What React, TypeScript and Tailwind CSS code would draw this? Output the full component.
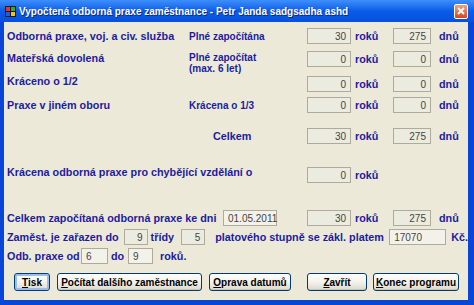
import React from 'react';

const lbl = 'text-[#1c1ca0] font-bold whitespace-nowrap';

const Box = ({ value, w, align = 'right', light = false }: { value: string; w: string; align?: 'left' | 'right'; light?: boolean }) => (
  <div
    className={`${w} h-[16px] shrink-0 border border-[#aeab9c] ${light ? 'bg-[#f3f2ea]' : 'bg-[#ecebdf]'} flex items-center px-[4px] text-[10px] font-normal text-[#444] ${
      align === 'right' ? 'justify-end' : 'justify-start'
    }`}
  >
    {value}
  </div>
);

// years + days pair used in the upper block
const YearsDays = ({ y, d }: { y: string; d: string }) => (
  <>
    <Box value={y} w="w-[44px]" />
    <span className={`${lbl} w-[42px] pl-[4px]`}>roků</span>
    <Box value={d} w="w-[38px]" />
    <span className={`${lbl} pl-[8px]`}>dnů</span>
  </>
);

const Btn = ({ children, w, focused = false }: { children: React.ReactNode; w: string; focused?: boolean }) => (
  <button
    className={`${w} h-[18px] shrink-0 rounded-[3px] border border-[#003c74] bg-gradient-to-b from-[#ffffff] via-[#f3f2ec] to-[#dcd9cc] text-[10px] font-bold text-black whitespace-nowrap flex items-center justify-center ${
      focused ? 'shadow-[inset_0_0_0_2px_#9cbcf0]' : 'shadow-[inset_0_-1px_0_#c9c5b5]'
    }`}
  >
    {children}
  </button>
);

export default function App() {
  return (
    <div
      className="w-[474px] h-[305px] flex flex-col bg-[#0846d8] overflow-hidden"
      style={{ fontFamily: '"Liberation Sans", Arial, sans-serif' }}
    >
      {/* Title bar */}
      <div className="h-[22px] shrink-0 flex items-center pl-[5px] pr-[6px] bg-gradient-to-b from-[#3d8ffc] via-[#0a5ce8] to-[#0650dc]">
        <svg width="11" height="11" viewBox="0 0 11 11" className="shrink-0">
          <rect x="0" y="0" width="11" height="11" fill="#1a1a1a" />
          <rect x="1" y="1" width="4" height="4" fill="#e23a2a" />
          <rect x="6" y="1" width="4" height="4" fill="#3aa63a" />
          <rect x="1" y="6" width="4" height="4" fill="#2a5ad8" />
          <rect x="6" y="6" width="4" height="4" fill="#f2c21a" />
        </svg>
        <span className="ml-[3px] text-white font-bold text-[10px] whitespace-nowrap [text-shadow:1px_1px_0_#0a2a8a]">
          Vypočtená odborná praxe zaměstnance - Petr Janda sadgsadha ashd
        </span>
        <div className="ml-auto w-[14px] h-[15px] rounded-[2px] border border-white bg-gradient-to-b from-[#f0a080] to-[#d6431c] flex items-center justify-center">
          <svg width="8" height="8" viewBox="0 0 8 8">
            <path d="M1 1 L7 7 M7 1 L1 7" stroke="white" strokeWidth="1.8" />
          </svg>
        </div>
      </div>

      {/* Body */}
      <div className="flex-1 ml-[4px] mr-[6px] mb-[5px] bg-[#ece9d8] pl-[3px] text-[10.8px] flex flex-col">
        <div className="mt-[6px] h-[16px] flex items-center">
          <span className={`${lbl} w-[182px]`}>Odborná praxe, voj. a civ. služba</span>
          <span className={`${lbl} w-[118px] text-[10px]`}>Plné započítána</span>
          <YearsDays y="30" d="275" />
        </div>
        <div className="mt-[7px] h-[16px] flex items-start">
          <span className={`${lbl} w-[182px] leading-[14px]`}>Mateřská dovolená</span>
          <span className={`${lbl} w-[118px] text-[10px] leading-[11px] pt-[1px]`}>
            Plné započítat
            <br />
            (max. 6 let)
          </span>
          <div className="flex items-center">
            <YearsDays y="0" d="0" />
          </div>
        </div>
        <div className="mt-[9px] h-[16px] flex items-center">
          <span className={`${lbl} w-[300px] -mt-[6px]`}>Kráceno o 1/2</span>
          <YearsDays y="0" d="0" />
        </div>
        <div className="mt-[5px] h-[16px] flex items-center">
          <span className={`${lbl} w-[182px]`}>Praxe v jiném oboru</span>
          <span className={`${lbl} w-[118px] text-[10px]`}>Krácena o 1/3</span>
          <YearsDays y="0" d="0" />
        </div>

        <div className="mt-[15px] h-[16px] flex items-center">
          <span className="w-[206px] shrink-0" />
          <span className={`${lbl} w-[94px]`}>Celkem</span>
          <YearsDays y="30" d="275" />
        </div>
        <div className="mt-[23px] h-[16px] flex items-center">
          <span className={`${lbl} w-[300px] -mt-[5px]`}>Krácena odborná praxe pro chybějící vzdělání o</span>
          <Box value="0" w="w-[44px]" />
          <span className={`${lbl} pl-[4px]`}>roků</span>
        </div>

        <div className="mt-[27px] h-[16px] flex items-center">
          <span className={`${lbl} w-[216px]`}>Celkem započítaná odborná praxe ke dni</span>
          <Box value="01.05.2011" w="w-[54px]" align="left" light />
          <span className="w-[30px] shrink-0" />
          <YearsDays y="30" d="275" />
        </div>
        <div className="mt-[3px] h-[16px] flex items-center">
          <span className={`${lbl} w-[118px]`}>Zaměst. je zařazen do</span>
          <Box value="9" w="w-[24px]" />
          <span className={`${lbl} w-[34px] pl-[3px]`}>třídy</span>
          <Box value="5" w="w-[24px]" />
          <span className={`${lbl} w-[186px] pl-[10px]`}>platového stupně se zákl. platem</span>
          <Box value="17070" w="w-[57px]" align="left" light />
          <span className={`${lbl} pl-[5px]`}>Kč.</span>
        </div>
        <div className="mt-[3px] h-[16px] flex items-center">
          <span className={`${lbl} w-[74px]`}>Odb. praxe od</span>
          <Box value="6" w="w-[27px]" align="left" light />
          <span className={`${lbl} w-[20px] pl-[3px]`}>do</span>
          <Box value="9" w="w-[25px]" align="left" light />
          <span className={`${lbl} pl-[7px]`}>roků.</span>
        </div>

        <div className="mt-[9px] flex items-center">
          <span className="w-[7px] shrink-0" />
          <Btn w="w-[36px]" focused>
            <span className="underline">T</span>isk
          </Btn>
          <span className="w-[7px] shrink-0" />
          <Btn w="w-[145px]">
            <span className="underline">P</span>očítat dalšího zaměstnance
          </Btn>
          <span className="w-[7px] shrink-0" />
          <Btn w="w-[82px]">
            <span className="underline">O</span>prava datumů
          </Btn>
          <span className="w-[16px] shrink-0" />
          <Btn w="w-[60px]">
            <span className="underline">Z</span>avřít
          </Btn>
          <span className="w-[6px] shrink-0" />
          <Btn w="w-[86px]">
            <span className="underline">K</span>onec programu
          </Btn>
        </div>
      </div>
    </div>
  );
}
